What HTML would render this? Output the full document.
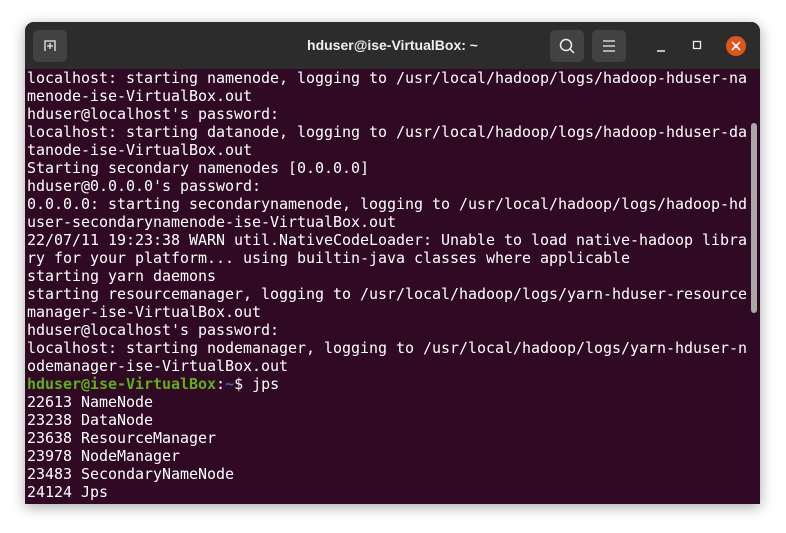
<!DOCTYPE html>
<html><head><meta charset="utf-8"><style>
html,body{margin:0;padding:0;width:786px;height:533px;background:#fff;overflow:hidden}
.win{position:absolute;left:25px;top:22px;width:735px;height:482px;border-radius:9px 9px 0 0;overflow:hidden;box-shadow:0 3px 14px rgba(0,0,0,.35);background:#300a24}
.hdr{position:absolute;left:0;top:0;width:735px;height:47px;background:#2c2c2c}
.title{position:absolute;left:0;right:0;top:15px;text-align:center;color:#f0f0f0;font:bold 14px "Liberation Sans",sans-serif}
.btn{position:absolute;top:8px;width:34px;height:32px;border-radius:5px;background:#424242}
.term{position:absolute;left:2px;top:47px;font:15px/18px "DejaVu Sans Mono","Liberation Mono",monospace;color:#fff;white-space:pre;letter-spacing:-0.03px}
.g{color:#5fae1c;font-weight:bold}.b{color:#3d6bb0;font-weight:bold}
.sb{position:absolute;left:726px;top:101px;width:6px;height:190px;border-radius:3px;background:#a8a8a8}
</style></head><body>
<div class="win">
<div class="hdr">
<div class="btn" style="left:8px"><svg width="34" height="32"><path d="M12 21V11h10v10M14 16h6M17 13v6" stroke="#eee" stroke-width="1.3" fill="none"/></svg></div>
<div class="title">hduser@ise-VirtualBox: ~</div>
<div class="btn" style="left:525px"><svg width="34" height="32"><circle cx="16" cy="15" r="5.5" stroke="#eee" stroke-width="1.5" fill="none"/><path d="M20 19l4 4" stroke="#eee" stroke-width="1.5"/></svg></div>
<div class="btn" style="left:567px"><svg width="34" height="32"><path d="M11 11h12M11 16h12M11 21h12" stroke="#eee" stroke-width="1.3"/></svg></div>
<svg style="position:absolute;left:620px;top:10px" width="110" height="28"><path d="M12 19h8" stroke="#eee" stroke-width="1.5"/><rect x="48.5" y="9.5" width="7" height="7" stroke="#eee" stroke-width="1.3" fill="none"/><circle cx="91" cy="14" r="10" fill="#e0531f"/><path d="M87 10l8 8M95 10l-8 8" stroke="#fff" stroke-width="1.6"/></svg>
</div>
<div class="term">localhost: starting namenode, logging to /usr/local/hadoop/logs/hadoop-hduser-na
menode-ise-VirtualBox.out
hduser@localhost's password:
localhost: starting datanode, logging to /usr/local/hadoop/logs/hadoop-hduser-da
tanode-ise-VirtualBox.out
Starting secondary namenodes [0.0.0.0]
hduser@0.0.0.0's password:
0.0.0.0: starting secondarynamenode, logging to /usr/local/hadoop/logs/hadoop-hd
user-secondarynamenode-ise-VirtualBox.out
22/07/11 19:23:38 WARN util.NativeCodeLoader: Unable to load native-hadoop libra
ry for your platform... using builtin-java classes where applicable
starting yarn daemons
starting resourcemanager, logging to /usr/local/hadoop/logs/yarn-hduser-resource
manager-ise-VirtualBox.out
hduser@localhost's password:
localhost: starting nodemanager, logging to /usr/local/hadoop/logs/yarn-hduser-n
odemanager-ise-VirtualBox.out
<span class="g">hduser@ise-VirtualBox</span>:<span class="b">~</span>$ jps
22613 NameNode
23238 DataNode
23638 ResourceManager
23978 NodeManager
23483 SecondaryNameNode
24124 Jps</div>
<div class="sb"></div>
</div>
</body></html>
